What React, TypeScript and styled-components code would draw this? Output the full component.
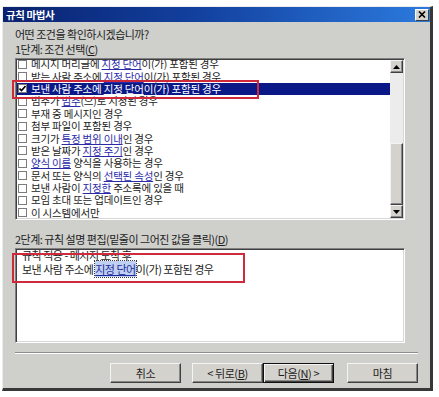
import styled, { createGlobalStyle } from 'styled-components';

type Seg = string | { link: string };

interface RuleRow {
    parts: Seg[];
    checked?: boolean;
    selected?: boolean;
}

const rows: RuleRow[] = [
    { parts: ['메시지 머리글에 ', { link: '지정 단어' }, '이(가) 포함된 경우'] },
    { parts: ['받는 사람 주소에 ', { link: '지정 단어' }, '이(가) 포함된 경우'] },
    { parts: ['보낸 사람 주소에 ', { link: '지정 단어' }, '이(가) 포함된 경우'], checked: true, selected: true },
    { parts: ['범주가 ', { link: '범주' }, '(으)로 지정된 경우'] },
    { parts: ['부재 중 메시지인 경우'] },
    { parts: ['첨부 파일이 포함된 경우'] },
    { parts: ['크기가 ', { link: '특정 범위 이내' }, '인 경우'] },
    { parts: ['받은 날짜가 ', { link: '지정 주기' }, '인 경우'] },
    { parts: [{ link: '양식 이름' }, ' 양식을 사용하는 경우'] },
    { parts: ['문서 또는 양식의 ', { link: '선택된 속성' }, '인 경우'] },
    { parts: ['보낸 사람이 ', { link: '지정한' }, ' 주소록에 있을 때'] },
    { parts: ['모임 초대 또는 업데이트인 경우'] },
    { parts: ['이 시스템에서만'] },
];

const GlobalStyle = createGlobalStyle`
    html, body {
        margin: 0;
        padding: 0;
        background: #ffffff;
    }
    body {
        font-family: "Noto Sans CJK KR", "Noto Sans", sans-serif;
        font-size: 11px;
        color: #1c1c1c;
    }
`;

const Page = styled.div`
    position: relative;
    width: 439px;
    height: 397px;
    box-sizing: border-box;
    padding: 6px 0 0 2px;
`;

const Dialog = styled.div`
    width: 431px;
    height: 385px;
    box-sizing: border-box;
    background: #cfcfcc;
    border-top: 1px solid #ececec;
    border-left: 1px solid #ececec;
    border-right: 3px solid #383838;
    border-bottom: 3px solid #383838;
    display: flex;
    flex-direction: column;
`;

const TitleBar = styled.div`
    height: 15px;
    flex: 0 0 15px;
    display: flex;
    align-items: center;
    justify-content: space-between;
    padding: 0 1px 0 3px;
    background: linear-gradient(90deg, #0a2270 0%, #12409e 45%, #2c7ade 100%);
`;

const Title = styled.span`
    color: #ffffff;
    font-weight: 700;
    font-size: 10.5px;
    letter-spacing: -0.4px;
    line-height: 15px;
`;

const CloseButton = styled.div`
    width: 14px;
    height: 12px;
    box-sizing: border-box;
    background: #d4d2cc;
    border: 1px solid;
    border-color: #ffffff #404040 #404040 #ffffff;
    display: flex;
    align-items: center;
    justify-content: center;
`;

const Body = styled.div`
    flex: 1;
    display: flex;
    flex-direction: column;
    padding: 5px 12px 5px 12px;
`;

const Line = styled.div<{ $gap?: number }>`
    height: 15px;
    line-height: 15px;
    margin-top: ${p => p.$gap ?? 0}px;
    letter-spacing: -0.5px;
    white-space: nowrap;
`;

const Sunken = styled.div`
    width: 390px;
    box-sizing: border-box;
    background: #ffffff;
    border: 1px solid;
    border-color: #808080 #ffffff #ffffff #808080;
    box-shadow: inset 1px 1px 0 #404040, inset -1px -1px 0 #d8d8d8;
    overflow: hidden;
`;

const ListFrame = styled(Sunken)`
    margin-top: 1px;
    height: 162px;
    padding: 1px;
    display: flex;
`;

const ListViewport = styled.div`
    flex: 1;
    overflow: hidden;
`;

const Rows = styled.div`
    margin-top: -2px;
`;

const Row = styled.div<{ $selected?: boolean }>`
    height: 12.4px;
    display: flex;
    align-items: center;
    gap: 4px;
    padding-left: 1px;
    background: ${p => (p.$selected ? '#0b1888' : 'transparent')};
    color: ${p => (p.$selected ? '#ffffff' : '#1c1c1c')};
`;

const Check = styled.span`
    width: 9px;
    height: 9px;
    flex: 0 0 9px;
    box-sizing: border-box;
    border: 1px solid #7c7c7c;
    background: #ffffff;
    display: flex;
    align-items: center;
    justify-content: center;
`;

const RowText = styled.span`
    font-size: 10.5px;
    line-height: 12px;
    letter-spacing: -0.2px;
    white-space: nowrap;
`;

const Link = styled.span<{ $selected?: boolean }>`
    color: ${p => (p.$selected ? '#ffffff' : '#2b2ba8')};
    text-decoration: underline;
`;

const ScrollBar = styled.div`
    width: 13px;
    flex: 0 0 13px;
    display: flex;
    flex-direction: column;
    background: #ececec;
`;

const Raised = styled.div`
    box-sizing: border-box;
    background: #d4d2cc;
    border: 1px solid;
    border-color: #f4f4f4 #404040 #404040 #f4f4f4;
    box-shadow: inset -1px -1px 0 #888888;
`;

const ScrollButton = styled(Raised)`
    height: 13px;
    flex: 0 0 13px;
    display: flex;
    align-items: center;
    justify-content: center;
`;

const TrackSpace = styled.div`
    flex: 0 0 70px;
`;

const Thumb = styled(Raised)`
    flex: 1;
`;

const DescBox = styled(Sunken)`
    margin-top: 1px;
    height: 95px;
    padding: 0 6px;
`;

const DescLines = styled.div`
    margin-top: -1px;
`;

const DescLine = styled.div`
    height: 14px;
    line-height: 14px;
    letter-spacing: -0.5px;
    white-space: nowrap;
`;

const ValueLink = styled.span`
    background: #bfd0f2;
    outline: 1px dotted #3a3a3a;
    color: #1f2c9c;
    text-decoration: underline;
`;

const Separator = styled.div`
    margin-top: 9px;
    height: 2px;
    box-sizing: border-box;
    border-top: 1px solid #8c8c8c;
    border-bottom: 1px solid #ffffff;
`;

const ButtonRow = styled.div`
    margin-top: 9px;
    display: flex;
    justify-content: flex-end;
`;

const Button = styled.div<{ $gapRight?: number; $default?: boolean }>`
    width: 71px;
    height: 20px;
    box-sizing: border-box;
    margin-right: ${p => p.$gapRight ?? 0}px;
    background: #d4d2cc;
    border: 1px solid;
    border-color: ${p => (p.$default ? '#101010' : '#f4f4f4 #404040 #404040 #f4f4f4')};
    box-shadow: ${p =>
        p.$default ? 'inset 1px 1px 0 #f4f4f4, inset -1px -1px 0 #404040, inset -2px -2px 0 #888888' : 'inset -1px -1px 0 #888888'};
    display: flex;
    align-items: center;
    justify-content: center;
    line-height: 18px;
    letter-spacing: -0.4px;
    white-space: nowrap;
`;

const Annotation = styled.div<{ $x: number; $y: number; $w: number; $h: number }>`
    position: absolute;
    left: ${p => p.$x}px;
    top: ${p => p.$y}px;
    width: ${p => p.$w}px;
    height: ${p => p.$h}px;
    box-sizing: border-box;
    border: 2px solid #cf2a3c;
    pointer-events: none;
`;

const Arrow = ({ up }: { up?: boolean }) => (
    <svg width="7" height="4" viewBox="0 0 7 4">
        <path d={up ? 'M0 4 L3.5 0 L7 4 Z' : 'M0 0 L3.5 4 L7 0 Z'} fill="#000" />
    </svg>
);

const App = () => (
    <Page>
        <GlobalStyle />
        <Dialog>
            <TitleBar>
                <Title>규칙 마법사</Title>
                <CloseButton>
                    <svg width="8" height="7" viewBox="0 0 8 7">
                        <path d="M1 0.5 L7 6.5 M7 0.5 L1 6.5" stroke="#000" strokeWidth="1.6" />
                    </svg>
                </CloseButton>
            </TitleBar>
            <Body>
                <Line>어떤 조건을 확인하시겠습니까?</Line>
                <Line>
                    1단계: 조건 선택(<u>C</u>)
                </Line>
                <ListFrame>
                    <ListViewport>
                        <Rows>
                            {rows.map((row, i) => (
                                <Row key={i} $selected={row.selected}>
                                    <Check>
                                        {row.checked && (
                                            <svg width="7" height="7" viewBox="0 0 7 7">
                                                <path d="M0.5 3.5 L2.5 5.5 L6.5 1" stroke="#000" strokeWidth="1.6" fill="none" />
                                            </svg>
                                        )}
                                    </Check>
                                    <RowText>
                                        {row.parts.map((seg, j) =>
                                            typeof seg === 'string' ? (
                                                <span key={j}>{seg}</span>
                                            ) : (
                                                <Link key={j} $selected={row.selected}>
                                                    {seg.link}
                                                </Link>
                                            )
                                        )}
                                    </RowText>
                                </Row>
                            ))}
                        </Rows>
                    </ListViewport>
                    <ScrollBar>
                        <ScrollButton>
                            <Arrow up />
                        </ScrollButton>
                        <TrackSpace />
                        <Thumb />
                        <ScrollButton>
                            <Arrow />
                        </ScrollButton>
                    </ScrollBar>
                </ListFrame>
                <Line $gap={12}>
                    2단계: 규칙 설명 편집(밑줄이 그어진 값을 클릭)(<u>D</u>)
                </Line>
                <DescBox>
                    <DescLines>
                        <DescLine>규칙 적용 - 메시지 도착 후</DescLine>
                        <DescLine>
                            보낸 사람 주소에 <ValueLink>지정 단어</ValueLink>이(가) 포함된 경우
                        </DescLine>
                    </DescLines>
                </DescBox>
                <Separator />
                <ButtonRow>
                    <Button $gapRight={11}>취소</Button>
                    <Button>
                        &lt; 뒤로(<u>B</u>)
                    </Button>
                    <Button $gapRight={13} $default>
                        다음(<u>N</u>) &gt;
                    </Button>
                    <Button>마침</Button>
                </ButtonRow>
            </Body>
        </Dialog>
        <Annotation $x={12} $y={80} $w={247} $h={19} />
        <Annotation $x={12} $y={253} $w={233} $h={30} />
    </Page>
);

export default App;
